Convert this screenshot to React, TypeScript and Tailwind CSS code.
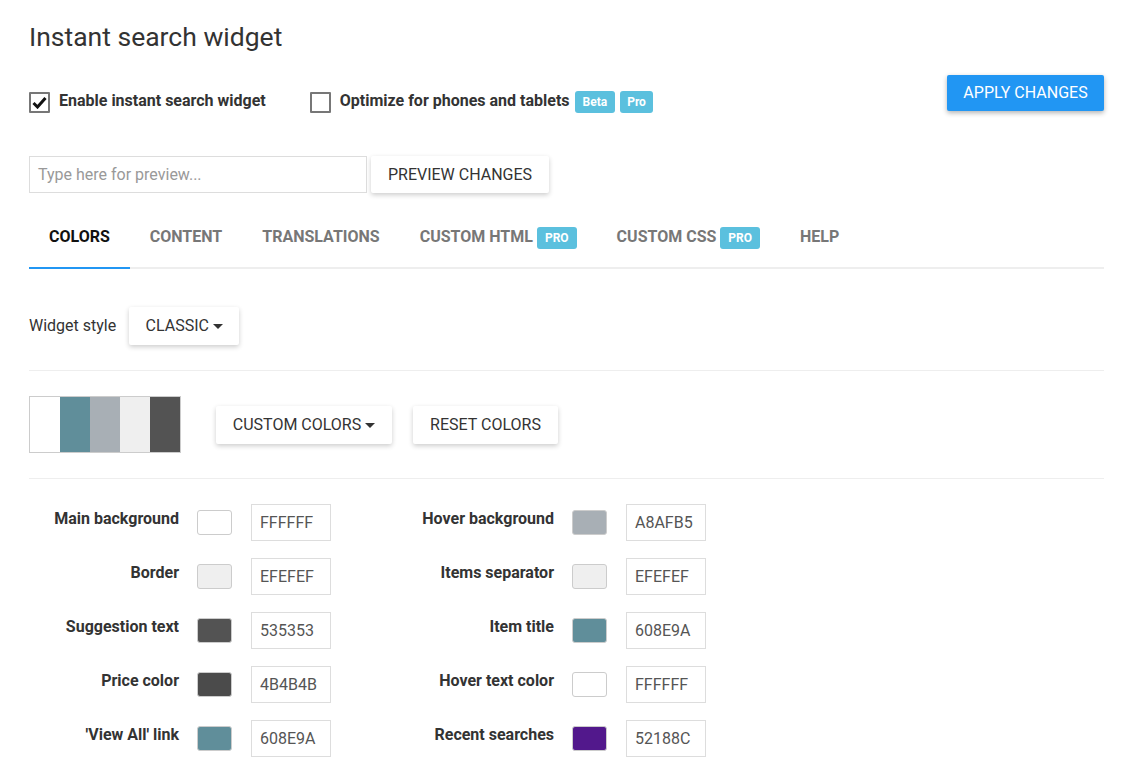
import React from 'react';

const font = { fontFamily: 'Roboto, "Liberation Sans", sans-serif' };

const Badge = ({ children, wide }: { children: React.ReactNode; wide?: boolean }) => (
  <span
    className={`inline-flex items-center justify-center h-[22px] rounded-[3px] bg-[#5bc0de] text-white text-[12px] font-bold leading-none ${
      wide ? 'px-[8px]' : 'px-[7px]'
    }`}
  >
    {children}
  </span>
);

const Checkbox = ({ checked }: { checked?: boolean }) => (
  <span className="w-[21px] h-[21px] border-2 border-[#777] rounded-[1px] flex items-center justify-center bg-white">
    {checked && (
      <svg width="15" height="13" viewBox="0 0 15 13">
        <path d="M1.5 7 L5.5 11 L13.5 2" fill="none" stroke="#111" strokeWidth="3" />
      </svg>
    )}
  </span>
);

const Caret = () => (
  <span className="inline-block ml-[4px] w-0 h-0 border-l-[5px] border-r-[5px] border-t-[5px] border-l-transparent border-r-transparent border-t-[#333] align-middle" />
);

const tabs = [
  { label: 'COLORS', active: true },
  { label: 'CONTENT' },
  { label: 'TRANSLATIONS' },
  { label: 'CUSTOM HTML', pro: true },
  { label: 'CUSTOM CSS', pro: true },
  { label: 'HELP' },
];

const left = [
  { label: 'Main background', hex: 'FFFFFF' },
  { label: 'Border', hex: 'EFEFEF' },
  { label: 'Suggestion text', hex: '535353' },
  { label: 'Price color', hex: '4B4B4B' },
  { label: "'View All' link", hex: '608E9A' },
];

const right = [
  { label: 'Hover background', hex: 'A8AFB5' },
  { label: 'Items separator', hex: 'EFEFEF' },
  { label: 'Item title', hex: '608E9A' },
  { label: 'Hover text color', hex: 'FFFFFF' },
  { label: 'Recent searches', hex: '52188C' },
];

const ColorRow = ({ label, hex }: { label: string; hex: string }) => (
  <div className="flex items-start h-[54px]">
    <div className="w-[150px] text-right text-[16px] font-bold text-[#333] pt-[3px] whitespace-nowrap">{label}</div>
    <span
      className="ml-[18px] mt-[6px] w-[35px] h-[25px] rounded-[3px] border border-[#ccc]"
      style={{ backgroundColor: '#' + hex }}
    />
    <div className="ml-[19px] w-[80px] h-[37px] border border-[#ddd] flex items-center pl-[8px] text-[16px] text-[#555]">
      {hex}
    </div>
  </div>
);

export default function App() {
  return (
    <div className="min-h-screen bg-white px-[29px] pr-[20px] text-[#333]" style={font}>
      <h1 className="pt-[19px] text-[26.5px] leading-[36px] text-[#333] font-normal">Instant search widget</h1>

      <div className="flex items-start justify-between w-[1075px] mt-[20px]">
        <div className="flex items-center pt-[17px]">
          <Checkbox checked />
          <span className="ml-[9px] text-[16px] font-bold text-[#333] -mt-[3px]">Enable instant search widget</span>
          <span className="ml-[44px]"><Checkbox /></span>
          <span className="ml-[9px] text-[16px] font-bold text-[#333] -mt-[3px]">Optimize for phones and tablets</span>
          <span className="ml-[5px] flex gap-[5px] -mt-[2px]">
            <Badge wide>Beta</Badge>
            <Badge>Pro</Badge>
          </span>
        </div>
        <button className="w-[157px] h-[36px] rounded-[2px] bg-[#2196f3] text-white text-[16px] shadow-[0_2px_5px_rgba(0,0,0,0.3)]">
          APPLY CHANGES
        </button>
      </div>

      <div className="flex items-center mt-[43px]">
        <div className="w-[338px] h-[37px] border border-[#ddd] flex items-center pl-[8px] text-[16px] text-[#999]">
          Type here for preview...
        </div>
        <button className="ml-[4px] w-[178px] h-[37px] rounded-[2px] bg-white text-[16px] text-[#333] shadow-[0_2px_5px_rgba(0,0,0,0.2)]">
          PREVIEW CHANGES
        </button>
      </div>

      <div className="mt-[17px] w-[1075px] flex border-b-2 border-[#eee]">
        {tabs.map((t) => (
          <div
            key={t.label}
            className={`flex items-center h-[59px] pb-[3px] px-[20px] -mb-[2px] text-[16px] font-bold ${
              t.active ? 'text-[#111] border-b-2 border-[#2196f3]' : 'text-[#777] border-b-2 border-transparent'
            }`}
          >
            {t.label}
            {t.pro && <span className="ml-[4px]"><Badge wide>PRO</Badge></span>}
          </div>
        ))}
      </div>

      <div className="flex items-center mt-[38px] h-[38px]">
        <span className="text-[16px] text-[#333]">Widget style</span>
        <button className="ml-[13px] w-[110px] h-[38px] rounded-[2px] bg-white text-[16px] text-[#333] shadow-[0_2px_5px_rgba(0,0,0,0.2)]">
          CLASSIC<Caret />
        </button>
      </div>

      <div className="mt-[25px] w-[1075px] border-t border-[#eee]" />

      <div className="flex items-center mt-[25px]">
        <div className="flex w-[152px] h-[57px] border border-[#ccc]">
          <span className="flex-1 bg-white" />
          <span className="flex-1 bg-[#608e9a]" />
          <span className="flex-1 bg-[#a8afb5]" />
          <span className="flex-1 bg-[#efefef]" />
          <span className="flex-1 bg-[#535353]" />
        </div>
        <button className="ml-[35px] w-[176px] h-[38px] rounded-[2px] bg-white text-[16px] text-[#333] shadow-[0_2px_5px_rgba(0,0,0,0.2)]">
          CUSTOM COLORS<Caret />
        </button>
        <button className="ml-[21px] w-[145px] h-[38px] rounded-[2px] bg-white text-[16px] text-[#333] shadow-[0_2px_5px_rgba(0,0,0,0.2)]">
          RESET COLORS
        </button>
      </div>

      <div className="mt-[25px] w-[1075px] border-t border-[#eee]" />

      <div className="flex mt-[25px]">
        <div className="w-[375px]">
          {left.map((r) => (
            <ColorRow key={r.label} {...r} />
          ))}
        </div>
        <div className="w-[375px]">
          {right.map((r) => (
            <ColorRow key={r.label} {...r} />
          ))}
        </div>
      </div>
    </div>
  );
}
